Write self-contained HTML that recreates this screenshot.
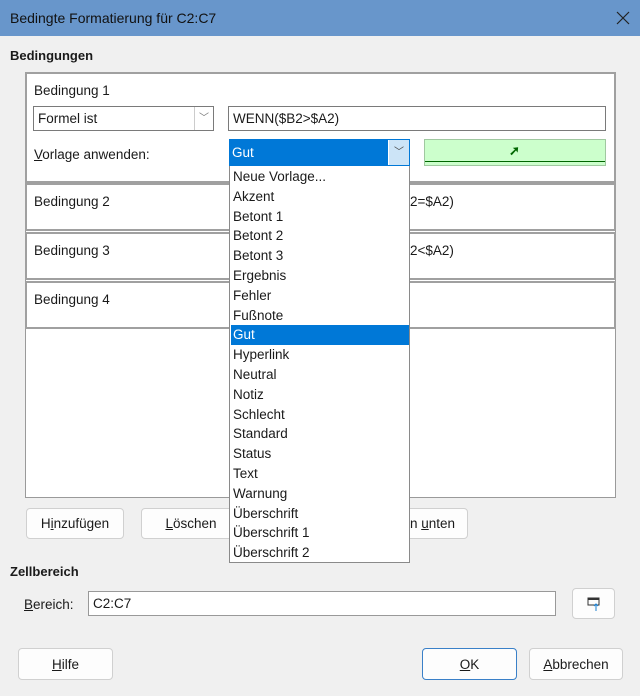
<!DOCTYPE html>
<html><head><meta charset="utf-8"><style>
*{box-sizing:border-box;margin:0;padding:0}
body{width:640px;height:696px;background:#f0f0f0;font-family:"Liberation Sans",sans-serif;font-size:13.5px;color:#1a1a1a;position:relative;overflow:hidden}
.a{position:absolute}
.title{left:0;top:0;width:640px;height:36px;background:#6896cb;color:#111;font-size:14px}
.box{background:#fff;border:1px solid #9a9a9a}
.btn{background:#fdfdfd;border:1px solid #d0d0d0;border-radius:4px;text-align:center;line-height:29px}
.inp{background:#fff;border:1px solid #7a7a7a;padding-left:4px}
u{text-decoration:underline}
.li{position:absolute;left:1px;width:178px;height:19.8px;padding-left:2px;line-height:19px}
</style></head><body>
<div class="a title"><span class="a" style="left:10px;top:10px">Bedingte Formatierung für C2:C7</span><svg class="a" style="left:616px;top:11px" width="14" height="14" viewBox="0 0 14 14"><path d="M1 1L13 13M13 1L1 13" stroke="#222" stroke-width="1.2"/></svg></div>
<div class="a" style="left:10px;top:48px;font-weight:bold;font-size:13px">Bedingungen</div>
<div class="a box" style="left:25px;top:72px;width:591px;height:426px"></div>
<div class="a box" style="left:25px;top:72px;width:591px;height:111px;border-width:2px;border-color:#a0a0a0"></div>
<div class="a" style="left:34px;top:83px">Bedingung 1</div>
<div class="a inp" style="left:33px;top:106px;width:181px;height:25px;line-height:23px">Formel ist<span class="a" style="left:160px;top:0;width:19px;height:23px;border-left:1px solid #ccc;text-align:center;color:#777;font-size:10px">﹀</span></div>
<div class="a inp" style="left:228px;top:106px;width:378px;height:25px;line-height:23px">WENN($B2&gt;$A2)</div>
<div class="a" style="left:34px;top:147px"><u>V</u>orlage anwenden:</div>
<div class="a" style="left:229px;top:139px;width:181px;height:27px;border:1px solid #0078d7;background:#fff"></div>
<div class="a" style="left:230px;top:140px;width:158px;height:25px;background:#0078d7;color:#fff;line-height:25px;padding-left:2px">Gut</div>
<div class="a" style="left:389px;top:140px;width:20px;height:25px;background:#cce4f7;text-align:center;line-height:25px;color:#444;font-size:10px">﹀</div>
<div class="a" style="left:424px;top:139px;width:182px;height:27px;background:#ccffcc;border:1px solid #a0c8a0"><div class="a" style="left:0;top:21px;width:180px;height:1px;background:#006600"></div><span class="a" style="left:84px;top:3px;color:#006600;font-weight:bold;font-size:13px">➚</span></div>
<div class="a box" style="left:25px;top:183px;width:591px;height:48px;border-width:2px;border-color:#a0a0a0"></div>
<div class="a" style="left:34px;top:194px">Bedingung 2</div><div class="a" style="left:410px;top:194px">2=$A2)</div>
<div class="a box" style="left:25px;top:232px;width:591px;height:48px;border-width:2px;border-color:#a0a0a0"></div>
<div class="a" style="left:34px;top:243px">Bedingung 3</div><div class="a" style="left:410px;top:243px">2&lt;$A2)</div>
<div class="a box" style="left:25px;top:281px;width:591px;height:48px;border-width:2px;border-color:#a0a0a0"></div>
<div class="a" style="left:34px;top:292px">Bedingung 4</div>
<div class="a btn" style="left:26px;top:508px;width:98px;height:31px">H<u>i</u>nzufügen</div>
<div class="a btn" style="left:141px;top:508px;width:100px;height:31px"><u>L</u>öschen</div>
<div class="a btn" style="left:380px;top:508px;width:88px;height:31px;text-align:right;padding-right:12px">n <u>u</u>nten</div>
<div class="a" style="left:229px;top:166px;width:181px;height:397px;background:#fff;border:1px solid #8a8a8a;border-top:none">
<div class="li" style="top:1px">Neue Vorlage...</div>
<div class="li" style="top:20.8px">Akzent</div>
<div class="li" style="top:40.6px">Betont 1</div>
<div class="li" style="top:60.4px">Betont 2</div>
<div class="li" style="top:80.2px">Betont 3</div>
<div class="li" style="top:100px">Ergebnis</div>
<div class="li" style="top:119.8px">Fehler</div>
<div class="li" style="top:139.6px">Fußnote</div>
<div class="li" style="top:159.4px;background:#0078d7;color:#fff">Gut</div>
<div class="li" style="top:179.2px">Hyperlink</div>
<div class="li" style="top:199px">Neutral</div>
<div class="li" style="top:218.8px">Notiz</div>
<div class="li" style="top:238.6px">Schlecht</div>
<div class="li" style="top:258.4px">Standard</div>
<div class="li" style="top:278.2px">Status</div>
<div class="li" style="top:298px">Text</div>
<div class="li" style="top:317.8px">Warnung</div>
<div class="li" style="top:337.6px">Überschrift</div>
<div class="li" style="top:357.4px">Überschrift 1</div>
<div class="li" style="top:377.2px">Überschrift 2</div>
</div>
<div class="a" style="left:10px;top:564px;font-weight:bold;font-size:13px">Zellbereich</div>
<div class="a" style="left:24px;top:597px"><u>B</u>ereich:</div>
<div class="a inp" style="left:88px;top:591px;width:468px;height:25px;line-height:23px;border-color:#999">C2:C7</div>
<div class="a btn" style="left:572px;top:588px;width:43px;height:31px"><svg width="16" height="16" viewBox="0 0 16 16" style="margin-top:7px"><rect x="2" y="2" width="11" height="7" fill="none" stroke="#333"/><rect x="2" y="2" width="11" height="2" fill="#333"/><path d="M10 15V8M8 10l2-2 2 2" stroke="#1a7fd0" fill="none"/></svg></div>
<div class="a btn" style="left:18px;top:648px;width:95px;height:32px;line-height:31px"><u>H</u>ilfe</div>
<div class="a btn" style="left:422px;top:648px;width:95px;height:32px;line-height:31px;border-color:#3a80c8"><u>O</u>K</div>
<div class="a btn" style="left:529px;top:648px;width:94px;height:32px;line-height:31px"><u>A</u>bbrechen</div>
</body></html>
